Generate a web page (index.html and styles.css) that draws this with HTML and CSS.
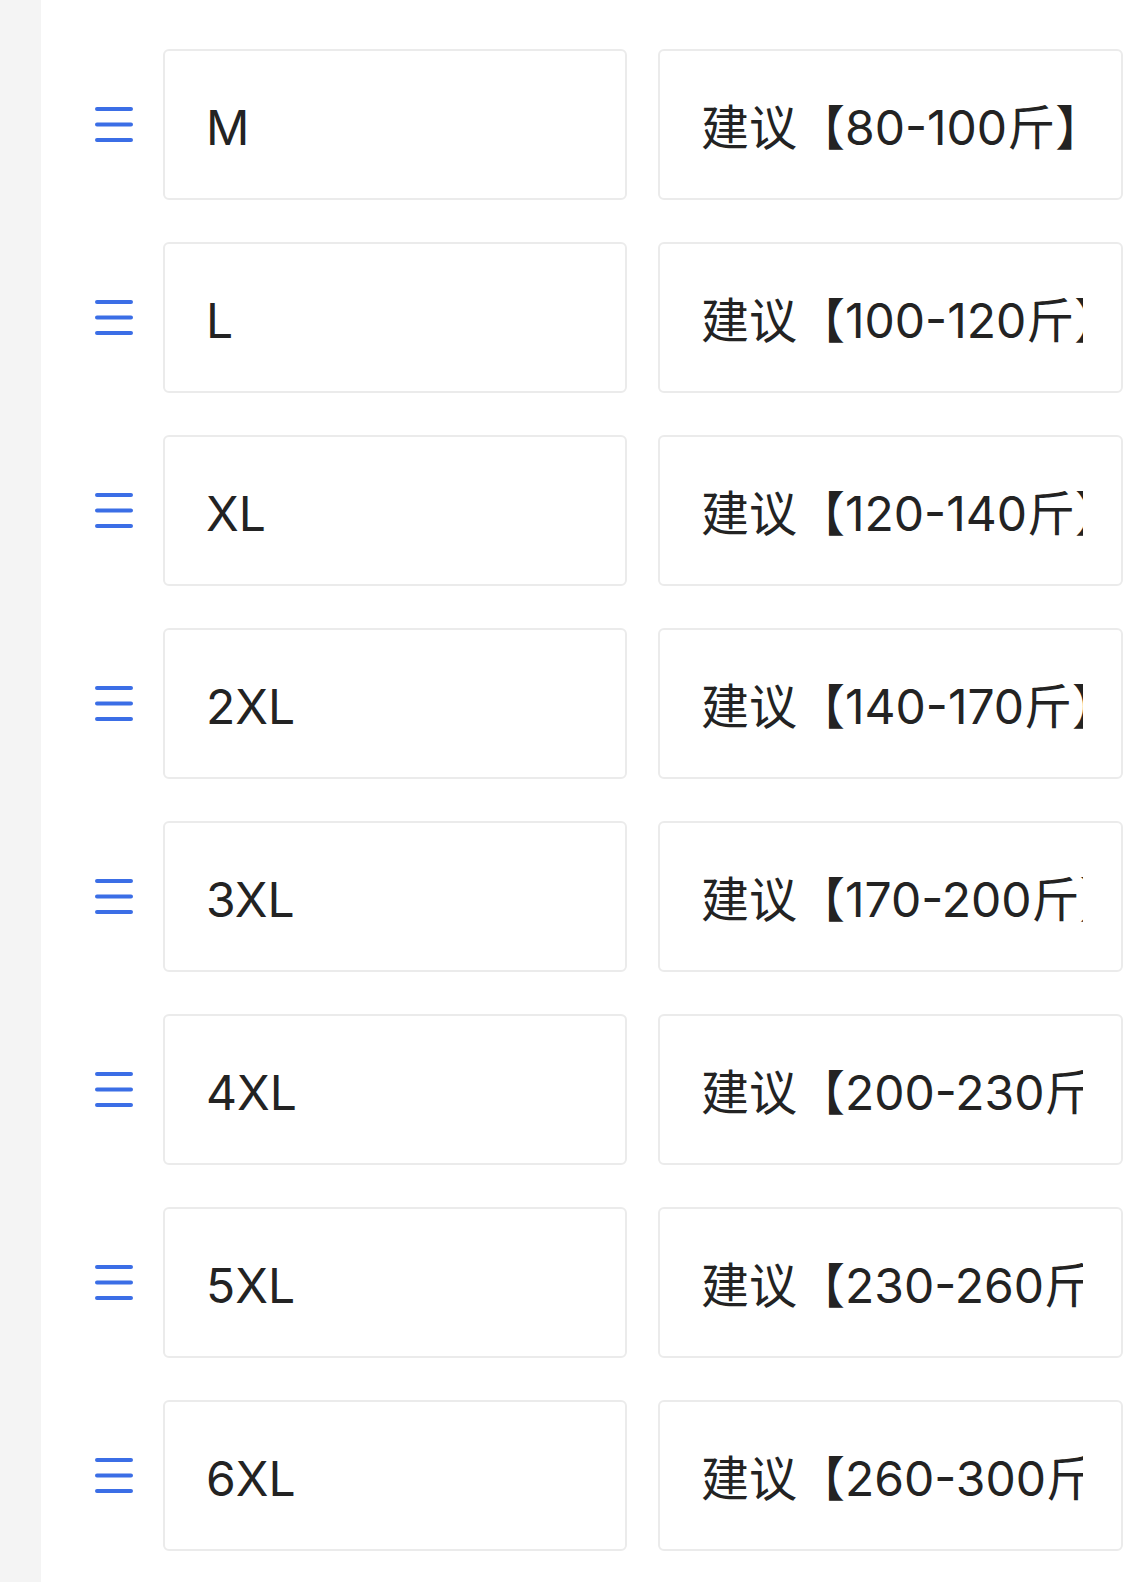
FILE: index.html
```html
<!DOCTYPE html>
<html lang="zh-CN">
<head>
<meta charset="utf-8">
<title>尺码</title>
<link rel="stylesheet" href="styles.css">
</head>
<body>
<div class="page">
  <aside class="rail"></aside>
  <main class="list">
    <div class="row">
      <span class="handle"><svg viewBox="0 0 38 35" width="38" height="35"><path d="M2 2H36M2 17.5H36M2 33H36"/></svg></span>
      <div class="fields">
        <div class="field"><span class="value">M</span></div>
        <div class="field"><span class="value">建议【80-100斤】</span></div>
      </div>
    </div>
    <div class="row">
      <span class="handle"><svg viewBox="0 0 38 35" width="38" height="35"><path d="M2 2H36M2 17.5H36M2 33H36"/></svg></span>
      <div class="fields">
        <div class="field"><span class="value">L</span></div>
        <div class="field"><span class="value">建议【100-120斤】</span></div>
      </div>
    </div>
    <div class="row">
      <span class="handle"><svg viewBox="0 0 38 35" width="38" height="35"><path d="M2 2H36M2 17.5H36M2 33H36"/></svg></span>
      <div class="fields">
        <div class="field"><span class="value">XL</span></div>
        <div class="field"><span class="value">建议【120-140斤】</span></div>
      </div>
    </div>
    <div class="row">
      <span class="handle"><svg viewBox="0 0 38 35" width="38" height="35"><path d="M2 2H36M2 17.5H36M2 33H36"/></svg></span>
      <div class="fields">
        <div class="field"><span class="value">2XL</span></div>
        <div class="field"><span class="value">建议【140-170斤】</span></div>
      </div>
    </div>
    <div class="row">
      <span class="handle"><svg viewBox="0 0 38 35" width="38" height="35"><path d="M2 2H36M2 17.5H36M2 33H36"/></svg></span>
      <div class="fields">
        <div class="field"><span class="value">3XL</span></div>
        <div class="field"><span class="value">建议【170-200斤】</span></div>
      </div>
    </div>
    <div class="row">
      <span class="handle"><svg viewBox="0 0 38 35" width="38" height="35"><path d="M2 2H36M2 17.5H36M2 33H36"/></svg></span>
      <div class="fields">
        <div class="field"><span class="value">4XL</span></div>
        <div class="field"><span class="value">建议【200-230斤】</span></div>
      </div>
    </div>
    <div class="row">
      <span class="handle"><svg viewBox="0 0 38 35" width="38" height="35"><path d="M2 2H36M2 17.5H36M2 33H36"/></svg></span>
      <div class="fields">
        <div class="field"><span class="value">5XL</span></div>
        <div class="field"><span class="value">建议【230-260斤】</span></div>
      </div>
    </div>
    <div class="row">
      <span class="handle"><svg viewBox="0 0 38 35" width="38" height="35"><path d="M2 2H36M2 17.5H36M2 33H36"/></svg></span>
      <div class="fields">
        <div class="field"><span class="value">6XL</span></div>
        <div class="field"><span class="value">建议【260-300斤】</span></div>
      </div>
    </div>
  </main>
</div>
</body>
</html>
```

FILE: styles.css
```css
html, body {
  margin: 0;
  padding: 0;
  background: #ffffff;
}

.page {
  display: flex;
  min-height: 1582px;
  font-family: Inter, "Noto Sans CJK SC", sans-serif;
  color: #232323;
}

.rail {
  flex: 0 0 41px;
  background: #f4f4f4;
}

.list {
  flex: 1;
  display: flex;
  flex-direction: column;
  gap: 42px;
  padding-top: 49px;
}

.row {
  display: flex;
  align-items: center;
}

.handle {
  flex: 0 0 122px;
  box-sizing: border-box;
  padding-left: 54px;
  display: flex;
  align-items: center;
}

.handle svg {
  display: block;
  fill: none;
  stroke: #3b6ee6;
  stroke-width: 4;
  stroke-linecap: round;
}

.fields {
  display: flex;
  gap: 31px;
}

.field {
  box-sizing: border-box;
  width: 464px;
  height: 151px;
  border: 2px solid #ebebeb;
  border-radius: 6px;
  background: #ffffff;
  padding: 6px 38px 0 41px;
  display: flex;
  align-items: center;
}

.field + .field {
  width: 465px;
}

.value {
  display: block;
  width: 100%;
  overflow: hidden;
  white-space: nowrap;
  font-size: 48px;
  line-height: 60px;
}
```
